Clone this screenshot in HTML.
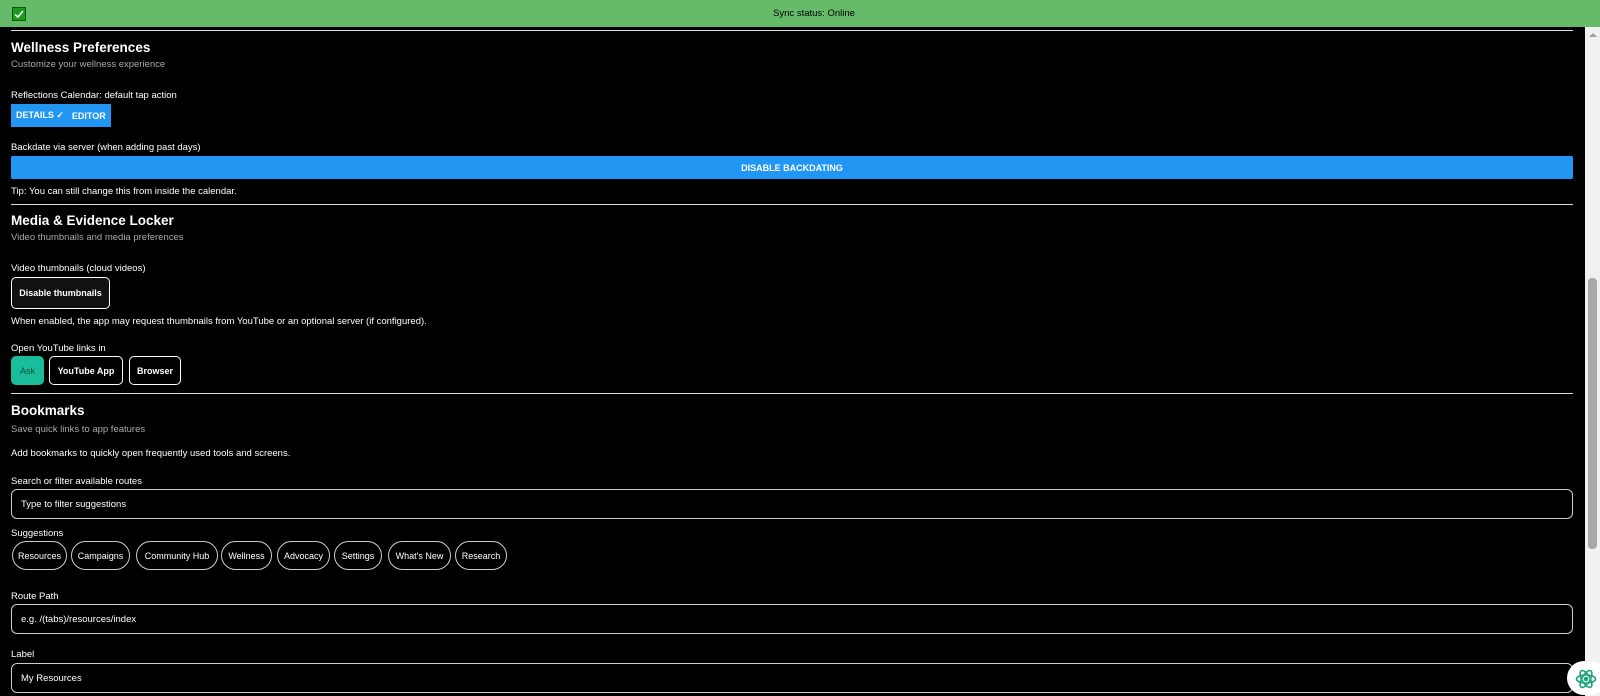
<!DOCTYPE html>
<html><head><meta charset="utf-8"><style>
*{box-sizing:border-box;margin:0;padding:0}
body{width:1600px;height:696px;overflow:hidden;background:#000;color:#fff;font-family:"Liberation Sans",sans-serif;font-size:9.5px;position:relative}
.a{position:absolute;white-space:nowrap}
.hr{position:absolute;left:11px;width:1562px;height:1px;background:#ddd}
.t{font-size:13.5px;font-weight:bold}
.s{color:#aaa;font-size:9.5px}
.btn{position:absolute;border:1px solid #fff;border-radius:5px;display:flex;align-items:center;justify-content:center;font-weight:bold;font-size:9px}
.inp{position:absolute;left:11px;width:1562px;height:30px;border:1px solid #ccc;border-radius:6px;padding-left:9px;display:flex;align-items:center;font-size:9.5px}
.chip{position:absolute;top:541px;height:29px;border:1px solid #ccc;border-radius:15px;display:flex;align-items:center;justify-content:center;font-size:9px}
</style></head><body>
<div class="a" style="left:0;top:0;width:1600px;height:27px;background:#66bb6a"></div>
<div class="a" style="left:12px;top:7px;width:14px;height:14px;background:#1a9c1a;border:1px solid #0a5a0a"><svg width="12" height="12" viewBox="0 0 12 12"><path d="M2 6.5L5 9L10 3" stroke="#fff" stroke-width="1.6" fill="none"/></svg></div>
<div class="a" style="left:0;width:1600px;top:8px;text-align:center;color:#000;font-size:9.5px;padding-left:28px">Sync status: Online</div>
<div class="hr" style="top:30px"></div>
<div class="a t" style="left:11px;top:40px">Wellness Preferences</div>
<div class="a s" style="left:11px;top:59px">Customize your wellness experience</div>
<div class="a" style="left:11px;top:90px">Reflections Calendar: default tap action</div>
<div class="a" style="left:11px;top:104px;width:100px;height:23px;background:#2196f3;font-weight:bold;font-size:9px;display:flex;align-items:center"><span style="padding-left:5px">DETAILS ✓</span><span style="padding-left:8px">EDITOR</span></div>
<div class="a" style="left:11px;top:142px">Backdate via server (when adding past days)</div>
<div class="a" style="left:11px;top:156px;width:1562px;height:23px;background:#2196f3;border-radius:2px;font-weight:bold;font-size:9px;display:flex;align-items:center;justify-content:center">DISABLE BACKDATING</div>
<div class="a" style="left:11px;top:186px">Tip: You can still change this from inside the calendar.</div>
<div class="hr" style="top:204px"></div>
<div class="a t" style="left:11px;top:213px">Media &amp; Evidence Locker</div>
<div class="a s" style="left:11px;top:232px">Video thumbnails and media preferences</div>
<div class="a" style="left:11px;top:263px">Video thumbnails (cloud videos)</div>
<div class="btn" style="left:11px;top:277px;width:99px;height:32px;background:#111">Disable thumbnails</div>
<div class="a" style="left:11px;top:316px">When enabled, the app may request thumbnails from YouTube or an optional server (if configured).</div>
<div class="a" style="left:11px;top:343px">Open YouTube links in</div>
<div class="btn" style="left:11px;top:356px;width:33px;height:29px;background:#1abc9c;border-color:#1abc9c;color:#053;font-weight:normal">Ask</div>
<div class="btn" style="left:49px;top:356px;width:74px;height:29px">YouTube App</div>
<div class="btn" style="left:129px;top:356px;width:52px;height:29px">Browser</div>
<div class="hr" style="top:393px"></div>
<div class="a t" style="left:11px;top:403px">Bookmarks</div>
<div class="a s" style="left:11px;top:424px">Save quick links to app features</div>
<div class="a" style="left:11px;top:448px">Add bookmarks to quickly open frequently used tools and screens.</div>
<div class="a" style="left:11px;top:476px">Search or filter available routes</div>
<div class="inp" style="top:489px">Type to filter suggestions</div>
<div class="a" style="left:11px;top:528px">Suggestions</div>
<div class="chip" style="left:12px;width:55px">Resources</div>
<div class="chip" style="left:71px;width:59px">Campaigns</div>
<div class="chip" style="left:136px;width:82px">Community Hub</div>
<div class="chip" style="left:221px;width:51px">Wellness</div>
<div class="chip" style="left:277px;width:53px">Advocacy</div>
<div class="chip" style="left:334px;width:48px">Settings</div>
<div class="chip" style="left:388px;width:63px">What's New</div>
<div class="chip" style="left:455px;width:52px">Research</div>
<div class="a" style="left:11px;top:591px">Route Path</div>
<div class="inp" style="top:604px">e.g. /(tabs)/resources/index</div>
<div class="a" style="left:11px;top:649px">Label</div>
<div class="inp" style="top:663px">My Resources</div>
<div class="a" style="left:1585px;top:27px;width:15px;height:669px;background:#f1f1f1"></div>
<div class="a" style="left:1588px;top:278px;width:9px;height:271px;background:#a8a8a8;border-radius:4px"></div>
<div class="a" style="left:1589px;top:33px;width:0;height:0;border-left:4px solid transparent;border-right:4px solid transparent;border-bottom:4px solid #a0a0a0"></div>
<div class="a" style="left:1567px;top:661px;width:40px;height:34px;background:#fff;border-radius:17px"></div>
<svg class="a" style="left:1575px;top:668px" width="22" height="22" viewBox="0 0 22 22" fill="none" stroke="#1aa37a" stroke-width="1.6"><ellipse cx="11" cy="11" rx="9.5" ry="4"/><ellipse cx="11" cy="11" rx="9.5" ry="4" transform="rotate(60 11 11)"/><ellipse cx="11" cy="11" rx="9.5" ry="4" transform="rotate(120 11 11)"/><circle cx="11" cy="11" r="1.5" fill="#1aa37a"/></svg>
</body></html>
